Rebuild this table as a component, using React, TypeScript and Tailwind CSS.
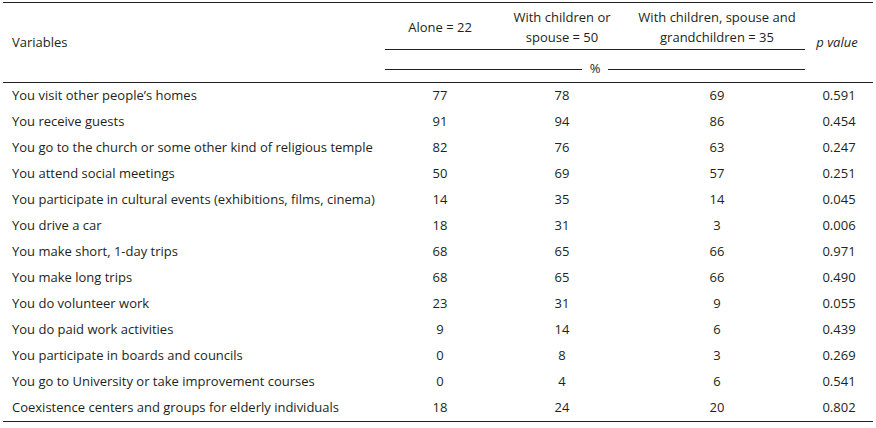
const rows: [string, string, string, string, string][] = [
  ["You visit other people’s homes", "77", "78", "69", "0.591"],
  ["You receive guests", "91", "94", "86", "0.454"],
  ["You go to the church or some other kind of religious temple", "82", "76", "63", "0.247"],
  ["You attend social meetings", "50", "69", "57", "0.251"],
  ["You participate in cultural events (exhibitions, films, cinema)", "14", "35", "14", "0.045"],
  ["You drive a car", "18", "31", "3", "0.006"],
  ["You make short, 1-day trips", "68", "65", "66", "0.971"],
  ["You make long trips", "68", "65", "66", "0.490"],
  ["You do volunteer work", "23", "31", "9", "0.055"],
  ["You do paid work activities", "9", "14", "6", "0.439"],
  ["You participate in boards and councils", "0", "8", "3", "0.269"],
  ["You go to University or take improvement courses", "0", "4", "6", "0.541"],
  ["Coexistence centers and groups for elderly individuals", "18", "24", "20", "0.802"],
];

const cols = "grid grid-cols-[382px_110px_134px_176px_68px]";

export default function App() {
  return (
    <div className="w-[876px] h-[428px] bg-white pt-[2px] pl-[3px] text-[#231f20] text-[13px] font-['Open_Sans',sans-serif]">
      <div className="w-[870px] border-t border-b border-[#231f20]">
        {/* header */}
        <div className={`${cols} h-[80px] border-b border-[#231f20]`}>
          <div className="row-span-2 flex items-center pl-[9px]">Variables</div>
          <div className="col-span-3 grid grid-cols-[110px_134px_176px] h-[47px] border-b border-[#231f20] pt-[2px] leading-[20px] text-center">
            <div className="flex items-center justify-center">Alone = 22</div>
            <div className="flex items-center justify-center">
              With children or
              <br />
              spouse = 50
            </div>
            <div className="flex items-center justify-center">
              With children, spouse and
              <br />
              grandchildren = 35
            </div>
          </div>
          <div className="row-span-2 col-start-5 row-start-1 flex items-center justify-center italic pr-[4px]">p value</div>
          <div className="col-span-3 flex items-center gap-[8px]">
            <div className="flex-1 h-px bg-[#231f20]" />
            <span>%</span>
            <div className="flex-1 h-px bg-[#231f20]" />
          </div>
        </div>
        {/* body */}
        {rows.map((r) => (
          <div key={r[0]} className={`${cols} h-[26px] items-center`}>
            <div className="pl-[9px] whitespace-nowrap">{r[0]}</div>
            <div className="text-center">{r[1]}</div>
            <div className="text-center">{r[2]}</div>
            <div className="text-center">{r[3]}</div>
            <div className="text-center">{r[4]}</div>
          </div>
        ))}
      </div>
    </div>
  );
}
